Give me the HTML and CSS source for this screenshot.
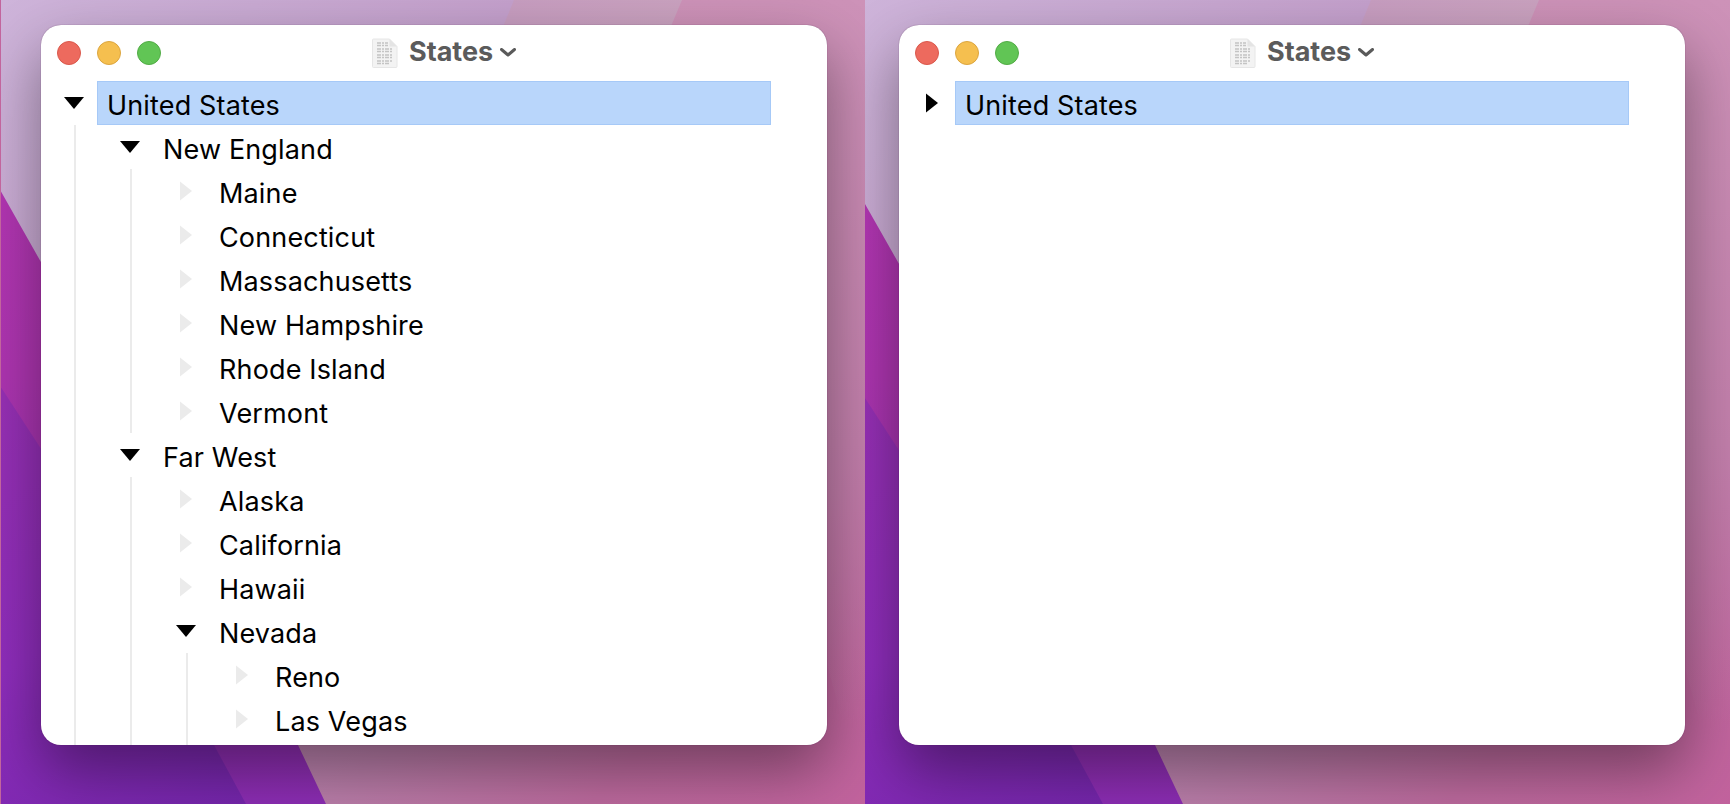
FILE: index.html
```html
<!DOCTYPE html>
<html lang="en">
<head>
<meta charset="utf-8">
<title>States</title>
<link rel="stylesheet" href="styles.css">
</head>
<body>
<svg class="defs" width="0" height="0" aria-hidden="true">
  <defs>
    <linearGradient id="gBase" gradientUnits="userSpaceOnUse" x1="0" y1="0" x2="880" y2="804">
      <stop offset="0" stop-color="#ceb4da"/>
      <stop offset="0.32" stop-color="#c4a0cc"/>
      <stop offset="0.66" stop-color="#bb7eaa"/>
      <stop offset="0.82" stop-color="#bd6a9e"/>
      <stop offset="1" stop-color="#c2629d"/>
    </linearGradient>
    <linearGradient id="gT1" gradientUnits="userSpaceOnUse" x1="500" y1="0" x2="690" y2="0">
      <stop offset="0" stop-color="#c79dc0"/>
      <stop offset="1" stop-color="#caa2bf"/>
    </linearGradient>
    <linearGradient id="gT2" gradientUnits="userSpaceOnUse" x1="0" y1="0" x2="0" y2="804">
      <stop offset="0" stop-color="#cd92b8"/>
      <stop offset="0.55" stop-color="#c27fab"/>
      <stop offset="0.9" stop-color="#c27fab" stop-opacity="0"/>
    </linearGradient>
    <linearGradient id="gMag" gradientUnits="userSpaceOnUse" x1="0" y1="190" x2="0" y2="804">
      <stop offset="0" stop-color="#b236b2"/>
      <stop offset="0.3" stop-color="#ad35b0"/>
      <stop offset="1" stop-color="#8c2db4"/>
    </linearGradient>
    <linearGradient id="gPur" gradientUnits="userSpaceOnUse" x1="0" y1="400" x2="240" y2="804">
      <stop offset="0" stop-color="#9630b4"/>
      <stop offset="0.5" stop-color="#8e2dbb"/>
      <stop offset="1" stop-color="#7526ac"/>
    </linearGradient>
    <g id="wall">
      <rect x="-10" y="0" width="900" height="804" fill="url(#gBase)"/>
      <polygon points="513,0 480,80 720,300 880,300 880,0" fill="url(#gT1)"/>
      <polygon points="681,0 660,50 860,790 890,790 890,0" fill="url(#gT2)"/>
      <polygon points="-10,174 297,715 297,745 325,804 -10,804" fill="url(#gMag)"/>
      <polygon points="-10,372 100,541 213,745 245,804 -10,804" fill="url(#gPur)"/>
    </g>
  </defs>
</svg>

<main class="desktop">
  <section class="panel panel-left">
    <svg class="wallpaper wallpaper-left" width="900" height="804" aria-hidden="true"><use href="#wall"/></svg>
    <div class="window">
      <header class="titlebar">
        <div class="lights"><span class="light red"></span><span class="light yellow"></span><span class="light green"></span></div>
        <div class="doc-title">
          <svg class="doc-icon" width="26" height="30" viewBox="0 0 26 30" aria-hidden="true">
            <path d="M1.500 1h16l7.500 7.500V28.500a1 1 0 0 1-1 1H1.500a1 1 0 0 1-1-1V2a1 1 0 0 1 1-1z" fill="#f3f3f3" stroke="#e6e6e6"/>
            <path d="M17.500 1v7.500H25z" fill="#e4e4e4"/>
            <path d="M5 5h11M5 7.500h11M5 11h16M5 13.500h16M5 17h16M5 19.500h16M5 23h16M5 25.500h12" stroke="#c4c4c4" stroke-width="1.600" stroke-dasharray="4 1 2 1"/>
          </svg>
          <span class="doc-name">States</span>
          <svg class="chevron" width="16" height="9" viewBox="0 0 16 9" aria-hidden="true"><path d="M1.500 1.500 8 7l6.500-5.500" fill="none" stroke="#5a5a5a" stroke-width="3" stroke-linecap="round" stroke-linejoin="round"/></svg>
        </div>
      </header>
      <div class="tree">
        <div class="row">
          <svg class="twisty" width="20" height="20" viewBox="0 0 20 20" aria-hidden="true"><path d="M0 4h20L10 16z"/></svg>
          <span class="label selected">United States</span>
        </div>
        <div class="children">
          <div class="row">
            <svg class="twisty" width="20" height="20" viewBox="0 0 20 20" aria-hidden="true"><path d="M0 4h20L10 16z"/></svg>
            <span class="label">New England</span>
          </div>
          <div class="children">
            <div class="row"><svg class="twisty leaf" width="20" height="20" viewBox="0 0 20 20" aria-hidden="true"><path d="M4 0.500 16 10 4 19.500z"/></svg><span class="label">Maine</span></div>
            <div class="row"><svg class="twisty leaf" width="20" height="20" viewBox="0 0 20 20" aria-hidden="true"><path d="M4 0.500 16 10 4 19.500z"/></svg><span class="label">Connecticut</span></div>
            <div class="row"><svg class="twisty leaf" width="20" height="20" viewBox="0 0 20 20" aria-hidden="true"><path d="M4 0.500 16 10 4 19.500z"/></svg><span class="label">Massachusetts</span></div>
            <div class="row"><svg class="twisty leaf" width="20" height="20" viewBox="0 0 20 20" aria-hidden="true"><path d="M4 0.500 16 10 4 19.500z"/></svg><span class="label">New Hampshire</span></div>
            <div class="row"><svg class="twisty leaf" width="20" height="20" viewBox="0 0 20 20" aria-hidden="true"><path d="M4 0.500 16 10 4 19.500z"/></svg><span class="label">Rhode Island</span></div>
            <div class="row"><svg class="twisty leaf" width="20" height="20" viewBox="0 0 20 20" aria-hidden="true"><path d="M4 0.500 16 10 4 19.500z"/></svg><span class="label">Vermont</span></div>
          </div>
          <div class="row">
            <svg class="twisty" width="20" height="20" viewBox="0 0 20 20" aria-hidden="true"><path d="M0 4h20L10 16z"/></svg>
            <span class="label">Far West</span>
          </div>
          <div class="children">
            <div class="row"><svg class="twisty leaf" width="20" height="20" viewBox="0 0 20 20" aria-hidden="true"><path d="M4 0.500 16 10 4 19.500z"/></svg><span class="label">Alaska</span></div>
            <div class="row"><svg class="twisty leaf" width="20" height="20" viewBox="0 0 20 20" aria-hidden="true"><path d="M4 0.500 16 10 4 19.500z"/></svg><span class="label">California</span></div>
            <div class="row"><svg class="twisty leaf" width="20" height="20" viewBox="0 0 20 20" aria-hidden="true"><path d="M4 0.500 16 10 4 19.500z"/></svg><span class="label">Hawaii</span></div>
            <div class="row">
              <svg class="twisty" width="20" height="20" viewBox="0 0 20 20" aria-hidden="true"><path d="M0 4h20L10 16z"/></svg>
              <span class="label">Nevada</span>
            </div>
            <div class="children children-clipped">
              <div class="row"><svg class="twisty leaf" width="20" height="20" viewBox="0 0 20 20" aria-hidden="true"><path d="M4 0.500 16 10 4 19.500z"/></svg><span class="label">Reno</span></div>
              <div class="row"><svg class="twisty leaf" width="20" height="20" viewBox="0 0 20 20" aria-hidden="true"><path d="M4 0.500 16 10 4 19.500z"/></svg><span class="label">Las Vegas</span></div>
            </div>
          </div>
        </div>
      </div>
    </div>
  </section>

  <section class="panel panel-right">
    <svg class="wallpaper wallpaper-right" width="900" height="804" aria-hidden="true"><use href="#wall"/></svg>
    <div class="window">
      <header class="titlebar">
        <div class="lights"><span class="light red"></span><span class="light yellow"></span><span class="light green"></span></div>
        <div class="doc-title">
          <svg class="doc-icon" width="26" height="30" viewBox="0 0 26 30" aria-hidden="true">
            <path d="M1.500 1h16l7.500 7.500V28.500a1 1 0 0 1-1 1H1.500a1 1 0 0 1-1-1V2a1 1 0 0 1 1-1z" fill="#f3f3f3" stroke="#e6e6e6"/>
            <path d="M17.500 1v7.500H25z" fill="#e4e4e4"/>
            <path d="M5 5h11M5 7.500h11M5 11h16M5 13.500h16M5 17h16M5 19.500h16M5 23h16M5 25.500h12" stroke="#c4c4c4" stroke-width="1.600" stroke-dasharray="4 1 2 1"/>
          </svg>
          <span class="doc-name">States</span>
          <svg class="chevron" width="16" height="9" viewBox="0 0 16 9" aria-hidden="true"><path d="M1.500 1.500 8 7l6.500-5.500" fill="none" stroke="#5a5a5a" stroke-width="3" stroke-linecap="round" stroke-linejoin="round"/></svg>
        </div>
      </header>
      <div class="tree">
        <div class="row">
          <svg class="twisty" width="20" height="20" viewBox="0 0 20 20" aria-hidden="true"><path d="M4 0.500 16 10 4 19.500z"/></svg>
          <span class="label selected">United States</span>
        </div>
      </div>
    </div>
  </section>
</main>
</body>
</html>
```

FILE: styles.css
```css
* {
  box-sizing: border-box;
}

html,
body {
  margin: 0;
  height: 100%;
  overflow: hidden;
}

body {
  font-family: Inter, "Liberation Sans", sans-serif;
  background: #8c2db4;
}

.defs {
  position: absolute;
}

.desktop {
  display: grid;
  grid-template-columns: 865px 865px;
  height: 804px;
}

.panel {
  position: relative;
  overflow: hidden;
  height: 804px;
  padding-top: 25px;
}

.panel-left {
  padding-left: 40px;
  border-left: 1px solid #c2659d;
}

.panel-right {
  padding-left: 34px;
}

.wallpaper {
  position: absolute;
  top: 0;
}

.wallpaper-left {
  left: 0;
}

.wallpaper-right {
  left: -7px;
}

.window {
  position: relative;
  z-index: 1;
  display: flex;
  flex-direction: column;
  width: 786px;
  height: 720px;
  overflow: hidden;
  background: #fff;
  border-radius: 20px;
  box-shadow: 0 0 1px 0 rgba(70, 20, 70, 0.7);
}

.panel::after {
  content: "";
  position: absolute;
  top: 25px;
  width: 786px;
  height: 720px;
  border-radius: 20px;
  box-shadow: 0 26px 60px 0 rgba(0, 0, 0, 0.4);
  pointer-events: none;
}

.panel-left::after {
  left: 40px;
}

.panel-right::after {
  left: 34px;
}

.titlebar {
  flex: none;
  display: flex;
  align-items: center;
  height: 56px;
  padding-left: 16px;
}

.lights {
  display: flex;
  gap: 16px;
}

.light {
  width: 24px;
  height: 24px;
  border-radius: 50%;
  border: 1px solid;
}

.red {
  background: #ed6a5e;
  border-color: #d9584c;
}

.yellow {
  background: #f5bf4f;
  border-color: #dba53f;
}

.green {
  background: #61c555;
  border-color: #52ab46;
}

.doc-title {
  display: flex;
  align-items: center;
  margin-left: 211px;
}

.doc-icon {
  flex: none;
  margin-right: 11px;
}

.doc-name {
  margin-top: -2px;
  font-size: 27px;
  font-weight: 700;
  line-height: 32px;
  color: #5b5b5b;
}

.chevron {
  flex: none;
  margin-left: 7px;
  margin-top: -2px;
}

.tree {
  flex: 1;
  min-height: 0;
  padding: 0 56px 0 23px;
  color: #000;
  font-size: 27px;
  letter-spacing: 0.15px;
}

.row {
  display: flex;
  align-items: center;
  height: 44px;
}

.twisty {
  flex: none;
  width: 20px;
  height: 20px;
  margin-right: 13px;
  fill: #000;
}

.twisty.leaf {
  fill: #ebebeb;
}

.label {
  flex: 1;
  align-self: stretch;
  display: flex;
  align-items: center;
  padding: 5px 0 0 10px;
  white-space: nowrap;
}

.selected {
  padding-left: 9px;
  background: #b9d6fb;
  border: 1px solid #a6c9f7;
}

.children {
  margin-left: 10px;
  padding-left: 44px;
  border-left: 2px solid #ebebeb;
}

.children-clipped {
  padding-bottom: 20px;
}
```
